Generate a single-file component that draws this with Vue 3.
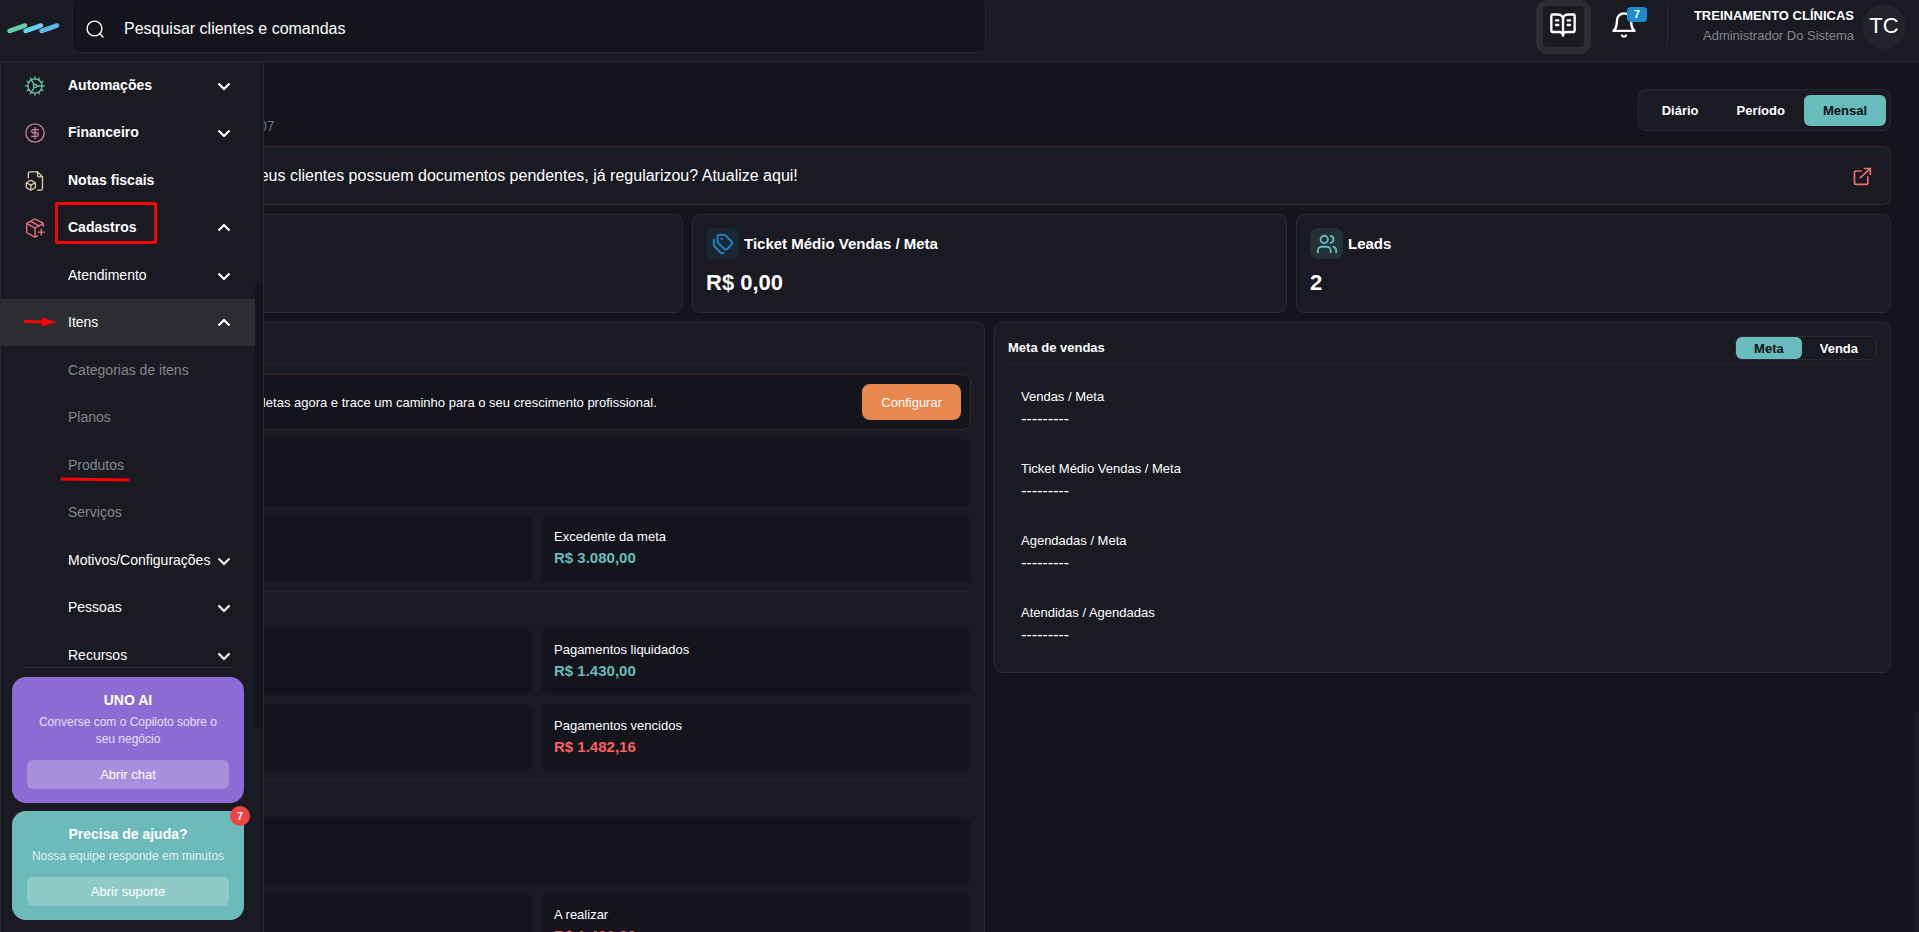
<script setup>
import { ref } from 'vue';

const search = ref('');
const periodo = ref('Mensal');
const periodos = ['Diário', 'Período', 'Mensal'];
const modo = ref('Meta');
const modos = ['Meta', 'Venda'];

const menu = [
    { label: 'Automações', icon: 'cog', level: 1, chevron: 'down' },
    { label: 'Financeiro', icon: 'dollar', level: 1, chevron: 'down' },
    { label: 'Notas fiscais', icon: 'file', level: 1 },
    { label: 'Cadastros', icon: 'package', level: 1, chevron: 'up', mark: 'box' },
    { label: 'Atendimento', level: 2, chevron: 'down' },
    { label: 'Itens', level: 2, chevron: 'up', active: true, mark: 'arrow' },
    { label: 'Categorias de itens', level: 3 },
    { label: 'Planos', level: 3 },
    { label: 'Produtos', level: 3, mark: 'underline' },
    { label: 'Serviços', level: 3 },
    { label: 'Motivos/Configurações', level: 2, chevron: 'down' },
    { label: 'Pessoas', level: 2, chevron: 'down' },
    { label: 'Recursos', level: 2, chevron: 'down' },
];

const icons = {
    cog: ['M12 20.500a8.500 8.500 0 1 0 0-17 8.500 8.500 0 0 0 0 17Z', 'M12 14a2 2 0 1 0 0-4 2 2 0 0 0 0 4Z', 'M12 1v2.500', 'M12 23v-2.500', 'm17.5 21.5-1.2-2.2', 'M11 10.3 7.700 4.700', 'm21.5 17.5-2.200-1.2', 'm2.5 6.5 2.2 1.2', 'M14 12h9', 'M1 12h2.500', 'm21.5 6.5-2.2 1.2', 'm2.5 17.5 2.2-1.2', 'm17.5 2.5-1.2 2.2', 'm6.500 2.500 1.2 2.2', 'm6.500 21.500 1.2-2.2', 'm11 13.7-3.300 5.600'],
    dollar: ['M12 23a11 11 0 1 0 0-22 11 11 0 0 0 0 22Z', 'M16 8h-6a2 2 0 1 0 0 4h4a2 2 0 1 1 0 4H8', 'M12 18.500V5.500'],
    file: ['M15 23h4a2 2 0 0 0 2-2V7l-6-6H6a2 2 0 0 0-2 2v5', 'M15 1v4a2 2 0 0 0 2 2h4', 'M2.500 13.500a2 2 0 0 0-1 1.760v3.500a2 2 0 0 0 1 1.780L6 22.500a2 2 0 0 0 2 0l3.500-2a2 2 0 0 0 1-1.760V15.300a2 2 0 0 0-1-1.780L8 11.500a2 2 0 0 0-2 0Z', 'M7 17v5.500', 'M12.200 14.300 7 17l-5.200-2.700'],
    package: ['M16 17h7', 'M19.500 13.500v7', 'M22 10V7.500a2 2 0 0 0-1-1.730l-8-4.300a2 2 0 0 0-2 0l-8 4.300A2 2 0 0 0 2 7.500v9a2 2 0 0 0 1 1.730l8 4.300a2 2 0 0 0 2 0l2-1.100', 'm7 4 10 5.500', 'M2.300 6.700 12 12l9.700-5.300', 'M12 22.500V12'],
    tags: ['M13.172 2a2 2 0 0 1 1.414.586l6.710 6.710a2.400 2.400 0 0 1 0 3.408l-4.592 4.592a2.400 2.400 0 0 1-3.408 0l-6.710-6.710A2 2 0 0 1 6 9.172V3a1 1 0 0 1 1-1z', 'M2 7v6.172a2 2 0 0 0 .586 1.414l6.710 6.710a2.400 2.400 0 0 0 3.191.193', 'M10.500 6.200v.6'],
    users: ['M16 21v-2a4 4 0 0 0-4-4H6a4 4 0 0 0-4 4v2', 'M9 11a4 4 0 1 0 0-8 4 4 0 0 0 0 8Z', 'M22 21v-2a4 4 0 0 0-3-3.870', 'M16 3.130a4 4 0 0 1 0 7.750'],
};

// O primeiro card fica sob o menu aberto
const cards = [
    {},
    { title: 'Ticket Médio Vendas / Meta', value: 'R$ 0,00', icon: 'tags', tone: 'blue' },
    { title: 'Leads', value: '2', icon: 'users', tone: 'teal' },
];

const metas = ['Vendas / Meta', 'Ticket Médio Vendas / Meta', 'Agendadas / Meta', 'Atendidas / Agendadas'];
</script>

<template>
    <div class="page">
        <header class="topbar">
            <a href="#" class="logo" aria-label="Início">
                <svg width="54" height="12" viewBox="0 0 54 12" fill="none" stroke-width="4.600" stroke-linecap="round">
                    <path d="M3.500 9 19 3.500" stroke="#66cdaa" />
                    <path d="M19.500 9 35 3.500" stroke="#5fd4f4" />
                    <path d="M35.500 9 51 3.500" stroke="#62b5e5" />
                </svg>
            </a>
            <label class="search">
                <svg width="18" height="18" viewBox="0 0 18 18" fill="none" stroke="currentColor" stroke-width="1.4"
                    stroke-linecap="round">
                    <circle cx="8.500" cy="8.500" r="7.400" />
                    <path d="m14 14 3 3" />
                </svg>
                <input v-model="search" type="text" placeholder="Pesquisar clientes e comandas"
                    aria-label="Pesquisar clientes e comandas">
            </label>
            <div class="actions">
                <button type="button" class="guide" aria-label="Guia">
                    <svg width="28" height="28" viewBox="0 0 24 24" class="line">
                        <path d="M12 7v14M16 12h2M16 8h2M6 12h2M6 8h2" />
                        <path
                            d="M3 18a1 1 0 0 1-1-1V4a1 1 0 0 1 1-1h5a4 4 0 0 1 4 4 4 4 0 0 1 4-4h5a1 1 0 0 1 1 1v13a1 1 0 0 1-1 1h-6a3 3 0 0 0-3 3 3 3 0 0 0-3-3z" />
                    </svg>
                </button>
                <button type="button" class="bell" aria-label="Notificações">
                    <svg width="28" height="28" viewBox="0 0 24 24" class="line">
                        <path d="M6 8a6 6 0 0 1 12 0c0 7 3 9 3 9H3s3-2 3-9" />
                        <path d="M10.300 21a1.940 1.940 0 0 0 3.400 0" />
                    </svg>
                    <span class="bell-count">7</span>
                </button>
                <div class="user">
                    <div class="user-text">
                        <strong>TREINAMENTO CLÍNICAS</strong>
                        <span>Administrador Do Sistema</span>
                    </div>
                    <span class="avatar">TC</span>
                </div>
            </div>
        </header>

        <div class="body">
            <main class="content">
                <div class="page-head">
                    <p class="date">07</p>
                    <div class="segmented">
                        <button v-for="p in periodos" :key="p" type="button" :class="{ on: periodo === p }"
                            @click="periodo = p">{{ p }}</button>
                    </div>
                </div>

                <a href="#" class="alert">
                    <span>Seus clientes possuem documentos pendentes, já regularizou? Atualize aqui!</span>
                    <svg width="20" height="20" viewBox="0 0 24 24" class="line">
                        <path d="M15 3h7v7M10 14 22 3M19 13v7a2 2 0 0 1-2 2H5a2 2 0 0 1-2-2V8a2 2 0 0 1 2-2h6" />
                    </svg>
                </a>

                <div class="cards">
                    <section v-for="(c, i) in cards" :key="i" class="card">
                        <template v-if="c.title">
                            <div class="card-title">
                                <span class="card-icon" :class="c.tone">
                                    <svg width="22" height="22" viewBox="0 0 24 24" class="line">
                                        <path v-for="d in icons[c.icon]" :key="d" :d="d" />
                                    </svg>
                                </span>
                                <h2>{{ c.title }}</h2>
                            </div>
                            <p class="card-value">{{ c.value }}</p>
                        </template>
                    </section>
                </div>

                <div class="panels">
                    <section class="panel">
                        <div class="panel-head"></div>
                        <div class="banner">
                            <span>Metas agora e trace um caminho para o seu crescimento profissional.</span>
                            <button type="button">Configurar</button>
                        </div>
                        <div class="tiles">
                            <div class="tile wide"></div>
                            <div class="tile"></div>
                            <div class="tile">
                                <span>Excedente da meta</span>
                                <strong class="good">R$ 3.080,00</strong>
                            </div>
                        </div>
                        <div class="separator"></div>
                        <div class="tiles">
                            <div class="tile"></div>
                            <div class="tile">
                                <span>Pagamentos liquidados</span>
                                <strong class="good">R$ 1.430,00</strong>
                            </div>
                            <div class="tile"></div>
                            <div class="tile">
                                <span>Pagamentos vencidos</span>
                                <strong class="bad">R$ 1.482,16</strong>
                            </div>
                        </div>
                        <div class="separator"></div>
                        <div class="tiles">
                            <div class="tile wide"></div>
                            <div class="tile"></div>
                            <div class="tile">
                                <span>A realizar</span>
                                <strong class="bad">R$ 1.430,00</strong>
                            </div>
                        </div>
                    </section>

                    <section class="panel">
                        <div class="panel-head">
                            <h3>Meta de vendas</h3>
                            <div class="switch">
                                <button v-for="m in modos" :key="m" type="button" :class="{ on: modo === m }"
                                    @click="modo = m">{{ m }}</button>
                            </div>
                        </div>
                        <dl class="metas">
                            <div v-for="m in metas" :key="m">
                                <dt>{{ m }}</dt>
                                <dd>---------</dd>
                            </div>
                        </dl>
                    </section>
                </div>
            </main>
            <div class="page-scroll"></div>

            <!-- Menu lateral -->
            <aside class="sidebar">
                <nav class="menu">
                    <ul>
                        <li v-for="item in menu" :key="item.label">
                            <a href="#" :class="['level-' + item.level, { active: item.active }]">
                                <span class="menu-icon" :class="item.icon">
                                    <svg v-if="item.icon" width="20" height="20" viewBox="0 0 24 24" class="line">
                                        <path v-for="d in icons[item.icon]" :key="d" :d="d" />
                                    </svg>
                                </span>
                                <span class="menu-label">{{ item.label }}</span>
                                <svg v-if="item.chevron" class="chevron" :class="item.chevron" width="14" height="14"
                                    viewBox="0 0 14 14">
                                    <path d="m1.500 4.500 5.500 5.500 5.500-5.500" />
                                </svg>
                                <span v-if="item.mark === 'box'" class="mark-box"></span>
                                <svg v-if="item.mark === 'arrow'" class="mark-arrow" width="34" height="10"
                                    viewBox="0 0 34 10">
                                    <path d="M2 4.500 20 5" stroke="#f00" stroke-width="3" stroke-linecap="round" />
                                    <path d="M19 .5 33 5 19 9.500Z" fill="#f00" />
                                </svg>
                                <svg v-if="item.mark === 'underline'" class="mark-underline" width="70" height="5"
                                    viewBox="0 0 70 5">
                                    <path d="M2 2 68 3" stroke="#f00" stroke-width="3" stroke-linecap="round" />
                                </svg>
                            </a>
                        </li>
                    </ul>
                </nav>
                <div class="menu-scroll"></div>
                <div class="side-footer">
                    <section class="help purple">
                        <h4>UNO AI</h4>
                        <p>Converse com o Copiloto sobre o seu negócio</p>
                        <button type="button">Abrir chat</button>
                    </section>
                    <section class="help teal">
                        <span class="help-count">7</span>
                        <h4>Precisa de ajuda?</h4>
                        <p>Nossa equipe responde em minutos</p>
                        <button type="button">Abrir suporte</button>
                    </section>
                </div>
            </aside>
        </div>
    </div>
</template>

<style>
body {
    background: #14141c;
}
</style>

<style scoped>
* {
    box-sizing: border-box;
    margin: 0;
    padding: 0;
}

.page {
    display: flex;
    flex-direction: column;
    height: 100vh;
    overflow: hidden;
    background: #14141c;
    color: #fff;
    font-family: "Liberation Sans", Arial, sans-serif;
    font-size: 13px;
}

button {
    border: 0;
    background: none;
    color: inherit;
    font: inherit;
    cursor: pointer;
}

a {
    color: inherit;
    text-decoration: none;
}

ul {
    list-style: none;
}

.line {
    fill: none;
    stroke: currentColor;
    stroke-width: 2;
    stroke-linecap: round;
    stroke-linejoin: round;
}

/* Topo */
.topbar {
    display: flex;
    flex: none;
    align-items: flex-start;
    height: 62px;
    background: #1a1a22;
    border-bottom: 1px solid #292a31;
}

.logo {
    padding: 22px 12px 0 6px;
}

.search {
    display: flex;
    flex: 0 1 914px;
    align-items: center;
    gap: 20px;
    height: 53px;
    padding: 6px 13px 0;
    background: #14141c;
    border: 1px solid #23242b;
    border-top: 0;
    border-radius: 6px;
}

.search input {
    flex: 1;
    height: 32px;
    border: 0;
    outline: 0;
    background: none;
    color: #fff;
    font: inherit;
    font-size: 16px;
}

.search input::placeholder {
    color: #fff;
    opacity: 1;
}

.actions {
    display: flex;
    align-items: flex-start;
    margin-left: auto;
    padding-right: 13px;
}

.guide {
    width: 55px;
    height: 54px;
    background: #1a1a22;
    border: 7px solid #2c2d31;
    border-top-width: 6px;
    border-radius: 11px;
}

.bell {
    position: relative;
    padding: 11px 15px 0 19px;
}

.bell-count {
    position: absolute;
    top: 7px;
    right: 6px;
    width: 20px;
    border-radius: 4px;
    background: #1d8bcb;
    font-size: 11px;
    font-weight: bold;
    line-height: 15px;
}

.user {
    display: flex;
    gap: 8px;
    margin: 5px 0 0 14px;
    padding-left: 26px;
    border-left: 1px solid #292a31;
    height: 42px;
}

.user-text {
    display: flex;
    flex-direction: column;
    text-align: right;
}

.user-text strong {
    line-height: 22px;
}

.user-text span {
    color: #85868c;
    line-height: 18px;
}

.avatar {
    width: 44px;
    height: 44px;
    border-radius: 50%;
    background: #23232b;
    font-size: 22px;
    line-height: 42px;
    text-align: center;
}

/* Conteúdo */
.body {
    position: relative;
    flex: 1;
    min-height: 0;
}

.content {
    display: flex;
    flex-direction: column;
    gap: 9px;
    height: 100%;
    padding: 27px 28px 0 88px;
    overflow: hidden;
}

.page-head {
    display: flex;
    flex: none;
    align-items: flex-start;
    justify-content: space-between;
    height: 46px;
    margin-bottom: 2px;
}

.date {
    padding: 28px 0 0 171px;
    color: #6f7183;
    font-size: 14px;
    line-height: 18px;
}

.segmented {
    display: flex;
    align-items: center;
    height: 42px;
    padding: 0 4px;
    background: #1a1a22;
    border: 1px solid #292a31;
    border-radius: 8px;
}

.segmented button {
    height: 31px;
    padding: 0 19px;
    border-radius: 6px;
    font-weight: bold;
}

.segmented .on,
.switch .on {
    background: #68bcbb;
    color: #0b1013;
}

.alert {
    display: flex;
    flex: none;
    align-items: center;
    justify-content: space-between;
    height: 59px;
    padding: 0 18px 0 160px;
    background: #1a1a22;
    border: 1px solid #43212a;
    border-radius: 8px;
    font-size: 16px;
    line-height: 20px;
}

.alert svg {
    color: #f16d6d;
}

.cards {
    display: grid;
    flex: none;
    grid-template-columns: repeat(3, 1fr);
    gap: 9px;
}

.card {
    height: 99px;
    padding: 13px;
    background: #1a1a22;
    border: 1px solid #292a31;
    border-radius: 8px;
}

.card-title {
    display: flex;
    align-items: center;
    gap: 5px;
}

.card-title h2 {
    font-size: 15px;
}

.card-icon {
    display: flex;
    align-items: center;
    justify-content: center;
    width: 33px;
    height: 31px;
    border-radius: 8px;
}

.card-icon.blue {
    background: #192733;
    color: #1d8bcb;
}

.card-icon.teal {
    background: #233135;
    color: #68bcbb;
}

.card-value {
    padding-top: 11px;
    font-size: 22px;
    font-weight: bold;
    line-height: 25px;
}

.panels {
    display: grid;
    flex: none;
    grid-template-columns: repeat(2, 1fr);
    align-items: start;
    gap: 9px;
}

.panel {
    padding: 13px;
    background: #1a1a22;
    border: 1px solid #292a31;
    border-radius: 8px;
}

.panel-head {
    display: flex;
    align-items: flex-start;
    justify-content: space-between;
    height: 29px;
    border-bottom: 1px solid #23242b;
}

.panel-head h3 {
    font-size: 13px;
    line-height: 24px;
}

.switch {
    display: flex;
    border: 1px solid #292a31;
    border-radius: 7px;
}

.switch button {
    height: 22px;
    padding: 0 18px;
    border-radius: 6px;
    font-weight: bold;
}

.banner {
    display: flex;
    align-items: center;
    justify-content: space-between;
    height: 56px;
    margin: 9px 0;
    padding: 0 9px 0 152px;
    background: #14141c;
    border: 1px solid #3c2520;
    border-radius: 8px;
}

.banner button {
    height: 36px;
    padding: 0 19px;
    background: #e6884f;
    border-radius: 8px;
}

.tiles {
    display: grid;
    grid-template-columns: repeat(2, 1fr);
    gap: 9px;
}

.tile {
    display: flex;
    flex-direction: column;
    height: 67px;
    padding: 12px 13px;
    background: #14141c;
    border-radius: 8px;
    line-height: 20px;
}

.tile.wide {
    grid-column: span 2;
}

.tile strong {
    font-size: 15px;
    line-height: 22px;
}

.good {
    color: #68bcbb;
}

.bad {
    color: #fb6060;
}

.separator {
    height: 37px;
    margin-top: 9px;
    border-top: 1px solid #23242b;
}

.metas {
    display: flex;
    flex-direction: column;
    gap: 22px;
    padding: 21px 13px 7px;
}

.metas div {
    height: 50px;
    line-height: 22px;
}

.metas dd {
    font-size: 16px;
}

.page-scroll {
    position: absolute;
    right: 0;
    bottom: 0;
    width: 6px;
    height: 219px;
    background: #1a1a22;
}

/* Menu lateral */
.sidebar {
    position: absolute;
    top: 0;
    bottom: 0;
    left: 0;
    display: flex;
    flex-direction: column;
    width: 264px;
    background: #1a1a22;
    border: solid #292a31;
    border-width: 0 1px;
}

.menu {
    flex: 1;
    min-height: 0;
    padding-right: 8px;
    overflow: hidden;
}

.menu li:nth-child(even) {
    margin-bottom: 1px;
}

.menu a {
    position: relative;
    display: flex;
    align-items: center;
    height: 47px;
    padding: 0 24px;
    font-size: 14px;
}

.menu .active {
    background: #2c2d31;
}

.menu .level-1 {
    font-weight: bold;
}

.menu .level-3 {
    color: #85868c;
}

.menu-icon {
    flex: none;
    width: 43px;
    height: 20px;
}

.menu-icon .line {
    stroke-width: 1.6;
}

.menu-icon.cog {
    color: #62c4a0;
}

.menu-icon.dollar {
    color: #d080ae;
}

.menu-icon.file {
    color: #dfcba3;
}

.menu-icon.package {
    color: #f0727f;
}

.menu-label {
    flex: 1;
    padding-bottom: 2px;
    overflow: hidden;
    white-space: nowrap;
}

.chevron {
    flex: none;
    margin-left: 6px;
    fill: none;
    stroke: #fff;
    stroke-width: 2.2;
}

.chevron.up {
    transform: rotate(180deg);
}

.mark-box {
    position: absolute;
    top: -2px;
    left: 54px;
    width: 102px;
    height: 42px;
    border: 3px solid #f00;
    border-radius: 2px;
}

.mark-arrow {
    position: absolute;
    top: 18px;
    left: 22px;
}

.mark-underline {
    position: absolute;
    top: 35px;
    left: 59px;
}

.menu-scroll {
    position: absolute;
    top: 222px;
    right: 0;
    width: 8px;
    height: 443px;
    background: #14141c;
}

.side-footer {
    display: flex;
    flex: none;
    flex-direction: column;
    gap: 8px;
    padding: 0 19px 12px 11px;
}

.side-footer::before {
    content: "";
    height: 1px;
    margin: 0 11px 1px;
    background: #292a31;
}

.help {
    position: relative;
    padding: 14px 15px;
    border-radius: 14px;
    text-align: center;
}

.help.purple {
    background: #8c6cd4;
}

.help.teal {
    background: #6cbab9;
}

.help h4 {
    font-size: 14px;
    line-height: 18px;
}

.help p {
    padding-top: 5px;
    color: rgba(255, 255, 255, 0.8);
    font-size: 12px;
    line-height: 17px;
}

.help.purple p {
    padding-right: 8px;
    padding-left: 8px;
}

.help button {
    width: 100%;
    height: 29px;
    margin-top: 12px;
    background: rgba(255, 255, 255, 0.24);
    border-radius: 6px;
}

.help-count {
    position: absolute;
    top: -5px;
    right: -6px;
    width: 20px;
    border-radius: 50%;
    background: #ef4444;
    font-size: 11px;
    font-weight: bold;
    line-height: 20px;
}
</style>
